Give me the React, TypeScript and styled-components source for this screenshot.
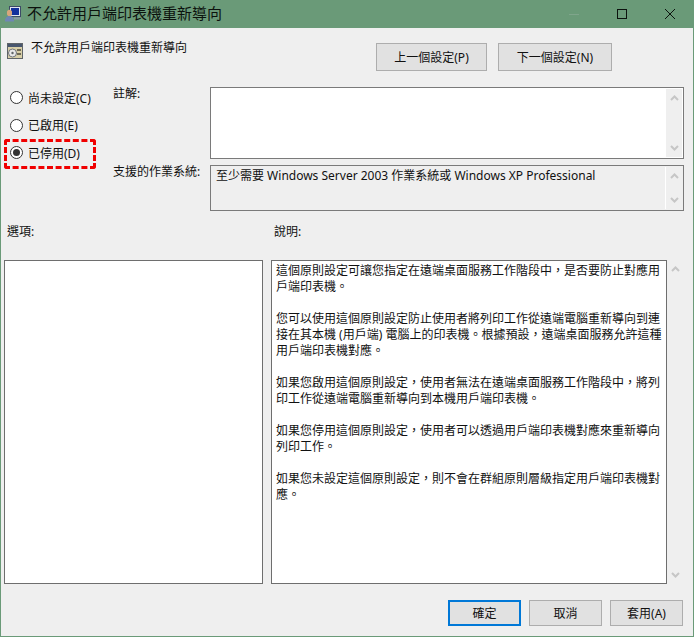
import React from 'react';
import styled, { createGlobalStyle } from 'styled-components';

const GlobalStyle = createGlobalStyle`
  html, body {
    margin: 0;
    padding: 0;
    background: #ffffff;
  }
  *, *::before, *::after {
    box-sizing: border-box;
  }
`;

const FONT = `"Noto Sans", "Noto Sans CJK TC", sans-serif`;

const Window = styled.div`
  width: 694px;
  height: 637px;
  display: flex;
  flex-direction: column;
  background: #efefef;
  border: 1px solid #6a9a78;
  border-top: none;
  font-family: ${FONT};
  font-size: 12px;
  color: #111111;
  overflow: hidden;
`;

const TitleBar = styled.div`
  height: 28px;
  flex: none;
  margin: 0 -1px;
  padding-left: 5px;
  display: flex;
  align-items: center;
  background: #6a9a78;
`;

const TitleText = styled.div`
  margin-left: 6px;
  margin-top: -2px;
  flex: 1;
  font-size: 15px;
  line-height: 28px;
  color: #0c120e;
`;

const WindowButton = styled.div`
  width: 48px;
  height: 28px;
  display: flex;
  align-items: center;
  justify-content: center;
`;

const Content = styled.div`
  flex: 1;
  min-height: 0;
  display: flex;
  flex-direction: column;
  padding: 0 9px 0 3px;
`;

const HeaderRow = styled.div`
  height: 56px;
  flex: none;
  display: flex;
  align-items: flex-start;
  padding-top: 15px;
`;

const PolicyHeading = styled.div`
  flex: 1;
  display: flex;
  align-items: flex-start;
  padding-left: 3px;
  line-height: 16px;
  height: 28px;
`;

const PolicyName = styled.span`
  margin-left: 8px;
  margin-top: -3px;
`;

const NavButtons = styled.div`
  display: flex;
  gap: 11px;
  margin-right: 72px;
`;

const Button = styled.button<{ $width: number; $primary?: boolean }>`
  width: ${(p) => p.$width}px;
  height: 26px;
  padding: 0;
  background: #e1e1e1;
  border: ${(p) => (p.$primary ? '2px solid #0078d7' : '1px solid #adadad')};
  font-family: ${FONT};
  font-size: 12px;
  color: #111111;
`;

const NavButton = styled(Button)`
  height: 28px;
`;

const SettingsRow = styled.div`
  display: flex;
  flex: none;
`;

const RadioColumn = styled.div`
  width: 109px;
  flex: none;
  display: flex;
  flex-direction: column;
`;

const RadioRow = styled.div<{ $marked?: boolean }>`
  position: relative;
  height: 27.5px;
  display: flex;
  align-items: center;
  padding-left: 6px;
  gap: 5px;

  ${(p) =>
    p.$marked &&
    `
    &::after {
      content: '';
      position: absolute;
      left: 0;
      top: 0;
      width: 92px;
      height: 30px;
      border: 3px dashed #f00000;
      border-radius: 3px;
    }
  `}
`;

const RadioCircle = styled.span<{ $checked?: boolean }>`
  width: 13px;
  height: 13px;
  flex: none;
  display: flex;
  align-items: center;
  justify-content: center;
  border: 1px solid #333333;
  border-radius: 50%;
  background: #ffffff;

  &::after {
    content: '';
    width: 7px;
    height: 7px;
    border-radius: 50%;
    background: ${(p) => (p.$checked ? '#333333' : 'transparent')};
  }
`;

const FieldGrid = styled.div`
  flex: 1;
  margin-top: 3px;
  display: grid;
  grid-template-columns: 97px 474px;
  grid-template-rows: 72px 46px;
  row-gap: 6px;
`;

const FieldLabel = styled.div`
  margin-top: -1px;
  line-height: 16px;
`;

const FieldBox = styled.div<{ $readOnly?: boolean }>`
  display: flex;
  border: 1px solid #7a7a7a;
  background: ${(p) => (p.$readOnly ? '#efefef' : '#ffffff')};
  padding: 1px 1px 1px 0;
`;

const FieldText = styled.div`
  flex: 1;
  padding: 1px 5px;
  font-size: 12px;
  line-height: 16px;
`;

const ScrollTrack = styled.div`
  width: 17px;
  flex: none;
  display: flex;
  flex-direction: column;
  justify-content: space-between;
  align-items: center;
  padding: 6px 0;
  background: #efefef;
  border-left: 1px solid #ffffff;
`;

const Chevron = ({ down }: { down?: boolean }) => (
  <svg width="9" height="6" viewBox="0 0 9 6">
    <path
      d={down ? 'M1 1 L4.5 4.5 L8 1' : 'M1 5 L4.5 1.5 L8 5'}
      fill="none"
      stroke="#c6c6c6"
      strokeWidth="2"
    />
  </svg>
);

const PaneLabels = styled.div`
  flex: none;
  height: 49px;
  padding: 13px 0 0 3px;
  display: grid;
  grid-template-columns: 267px 1fr;
  line-height: 16px;
`;

const Panes = styled.div`
  flex: none;
  height: 324px;
  display: flex;
`;

const OptionsPane = styled.div`
  width: 259px;
  flex: none;
  background: #ffffff;
  border: 1px solid #6e6e6e;
`;

const HelpPane = styled.div`
  width: 396px;
  margin-left: 8px;
  flex: none;
  background: #ffffff;
  border: 1px solid #6e6e6e;
  padding: 2px 0 0 4px;
  font-size: 12px;
  line-height: 16px;
  white-space: pre-line;
  overflow: hidden;
`;

const HelpScroll = styled.div`
  width: 16px;
  flex: none;
  display: flex;
  flex-direction: column;
  justify-content: space-between;
  align-items: center;
  padding: 6px 0;
`;

const Footer = styled.div`
  flex: 1;
  display: flex;
  justify-content: flex-end;
  gap: 8px;
  padding: 16px 1px 0 0;
`;

const HELP_TEXT = `這個原則設定可讓您指定在遠端桌面服務工作階段中，是否要防止對應用
戶端印表機。

您可以使用這個原則設定防止使用者將列印工作從遠端電腦重新導向到連
接在其本機 (用戶端) 電腦上的印表機。根據預設，遠端桌面服務允許這種
用戶端印表機對應。

如果您啟用這個原則設定，使用者無法在遠端桌面服務工作階段中，將列
印工作從遠端電腦重新導向到本機用戶端印表機。

如果您停用這個原則設定，使用者可以透過用戶端印表機對應來重新導向
列印工作。

如果您未設定這個原則設定，則不會在群組原則層級指定用戶端印表機對
應。`;

const AppIcon = () => (
  <svg width="16" height="16" viewBox="0 0 16 16">
    <rect x="4.5" y="0.5" width="11" height="10" fill="#dfe5ee" stroke="#3c4a66" />
    <rect x="6" y="2" width="8" height="7" fill="#12309c" />
    <path d="M2 7 A2.6 2.6 0 1 1 7 7 A2.6 2.6 0 1 1 2 7" fill="#d8a67c" />
    <path d="M0 15.5 C0 11.5 2 10 4.5 10 C7 10 9 11.5 9 15.5 Z" fill="#6f86b4" />
    <rect x="9" y="11.5" width="7" height="2" fill="#8d98a8" />
  </svg>
);

const PolicyIcon = () => (
  <svg width="16" height="16" viewBox="0 0 16 16">
    <rect x="0.5" y="0.5" width="15" height="15" fill="#d8cfa8" stroke="#5f6468" />
    <rect x="1" y="1" width="14" height="3" fill="#48566e" />
    <circle cx="5.5" cy="10" r="4" fill="#e8e8e8" stroke="#70747a" />
    <circle cx="5.5" cy="10" r="1.2" fill="#5f6468" />
    <rect x="10" y="6" width="4" height="2" fill="#6f6a55" />
    <rect x="10" y="10" width="4" height="2" fill="#6f6a55" />
  </svg>
);

export default function App() {
  return (
    <>
      <GlobalStyle />
      <Window lang="zh-Hant">
        <TitleBar>
          <AppIcon />
          <TitleText>不允許用戶端印表機重新導向</TitleText>
          <WindowButton>
            <svg width="10" height="10" viewBox="0 0 10 10">
              <path d="M0 5.5 H10" stroke="#7fa58b" />
            </svg>
          </WindowButton>
          <WindowButton>
            <svg width="10" height="10" viewBox="0 0 10 10">
              <rect x="0.5" y="0.5" width="9" height="9" fill="none" stroke="#0c120e" />
            </svg>
          </WindowButton>
          <WindowButton>
            <svg width="10" height="10" viewBox="0 0 10 10">
              <path d="M0 0 L10 10 M10 0 L0 10" stroke="#0c120e" />
            </svg>
          </WindowButton>
        </TitleBar>

        <Content>
          <HeaderRow>
            <PolicyHeading>
              <PolicyIcon />
              <PolicyName>不允許用戶端印表機重新導向</PolicyName>
            </PolicyHeading>
            <NavButtons>
              <NavButton $width={111}>上一個設定(P)</NavButton>
              <NavButton $width={114}>下一個設定(N)</NavButton>
            </NavButtons>
          </HeaderRow>

          <SettingsRow>
            <RadioColumn>
              <RadioRow>
                <RadioCircle />
                尚未設定(C)
              </RadioRow>
              <RadioRow>
                <RadioCircle />
                已啟用(E)
              </RadioRow>
              <RadioRow $marked>
                <RadioCircle $checked />
                已停用(D)
              </RadioRow>
            </RadioColumn>
            <FieldGrid>
              <FieldLabel>註解:</FieldLabel>
              <FieldBox>
                <FieldText />
                <ScrollTrack>
                  <Chevron />
                  <Chevron down />
                </ScrollTrack>
              </FieldBox>
              <FieldLabel>支援的作業系統:</FieldLabel>
              <FieldBox $readOnly>
                <FieldText>至少需要 Windows Server 2003 作業系統或 Windows XP Professional</FieldText>
                <ScrollTrack>
                  <Chevron />
                  <Chevron down />
                </ScrollTrack>
              </FieldBox>
            </FieldGrid>
          </SettingsRow>

          <PaneLabels>
            <span>選項:</span>
            <span>說明:</span>
          </PaneLabels>

          <Panes>
            <OptionsPane />
            <HelpPane>{HELP_TEXT}</HelpPane>
            <HelpScroll>
              <Chevron />
              <Chevron down />
            </HelpScroll>
          </Panes>

          <Footer>
            <Button $width={73} $primary>確定</Button>
            <Button $width={73}>取消</Button>
            <Button $width={73}>套用(A)</Button>
          </Footer>
        </Content>
      </Window>
    </>
  );
}
